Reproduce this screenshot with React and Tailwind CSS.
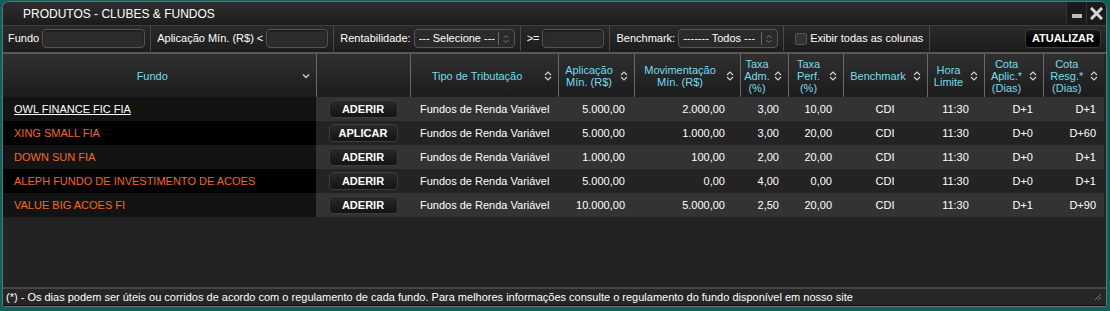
import React from "react";

const Sort = () => (
  <svg width="8" height="12" viewBox="0 0 8 12" className="shrink-0">
    <path d="M1 5 L4 2 L7 5" fill="none" stroke="#d0d0d0" strokeWidth="1.2" />
    <path d="M1 7 L4 10 L7 7" fill="none" stroke="#d0d0d0" strokeWidth="1.2" />
  </svg>
);

const Down = () => (
  <svg width="8" height="6" viewBox="0 0 8 6" className="shrink-0">
    <path d="M1 1.5 L4 4.5 L7 1.5" fill="none" stroke="#d0d0d0" strokeWidth="1.3" />
  </svg>
);

const SelChev = () => (
  <svg width="8" height="12" viewBox="0 0 8 12" className="shrink-0">
    <path d="M1.5 5 L4 2.5 L6.5 5" fill="none" stroke="#777" strokeWidth="1" />
    <path d="M1.5 7 L4 9.5 L6.5 7" fill="none" stroke="#777" strokeWidth="1" />
  </svg>
);

const Sep = () => <div className="w-px self-stretch bg-[#4a4a4a] ml-[5px] mr-[6px]" />;

const Input = ({ w }) => (
  <div className={`${w} h-[19px] rounded-[4px] border border-[#555] bg-[#2c2c2c] shadow-[inset_0_1px_2px_rgba(0,0,0,0.6)]`} />
);

const Select = ({ w, label }) => (
  <div className={`${w} h-[19px] rounded-[4px] border border-[#555] bg-[#2a2a2a] flex items-center pl-[4px] pr-[4px]`}>
    <span className="flex-1 text-white text-[11px] whitespace-nowrap overflow-hidden">{label}</span>
    <div className="w-px h-[13px] bg-[#666] mx-[3px]" />
    <SelChev />
  </div>
);

const headers = [
  { t: ["Fundo"], icon: "down" },
  { t: [], icon: null },
  { t: ["Tipo de Tributação"], icon: "sort" },
  { t: ["Aplicação", "Mín. (R$)"], icon: "sort" },
  { t: ["Movimentação", "Mín. (R$)"], icon: "sort" },
  { t: ["Taxa", "Adm.", "(%)"], icon: "sort" },
  { t: ["Taxa", "Perf.", "(%)"], icon: "sort" },
  { t: ["Benchmark"], icon: "sort" },
  { t: ["Hora", "Limite"], icon: "sort" },
  { t: ["Cota", "Aplic.*", "(Dias)"], icon: "sort" },
  { t: ["Cota", "Resg.*", "(Dias)"], icon: "sort" },
];

const widths = [313, 94, 148, 76, 106, 48, 55, 84, 57, 59, 61];

const rows = [
  ["OWL FINANCE FIC FIA", "ADERIR", "5.000,00", "2.000,00", "3,00", "10,00", "D+1", "D+1"],
  ["XING SMALL FIA", "APLICAR", "5.000,00", "1.000,00", "3,00", "20,00", "D+0", "D+60"],
  ["DOWN SUN FIA", "ADERIR", "1.000,00", "100,00", "2,00", "20,00", "D+0", "D+1"],
  ["ALEPH FUNDO DE INVESTIMENTO DE ACOES", "ADERIR", "5.000,00", "0,00", "4,00", "0,00", "D+0", "D+1"],
  ["VALUE BIG ACOES FI", "ADERIR", "10.000,00", "5.000,00", "2,50", "20,00", "D+1", "D+90"],
];

export default function App() {
  return (
    <div
      className="w-[1110px] h-[311px] bg-[#0d625d] pt-[1px] pl-[2px] pr-[3px] pb-[4px]"
      style={{ fontFamily: '"Liberation Sans", Arial, sans-serif' }}
    >
      <div className="h-full flex flex-col border border-[#6e6e6e] rounded-t-[7px] rounded-b-[2px] bg-[#222] overflow-hidden">
        {/* Title bar */}
        <div className="h-[24px] shrink-0 flex items-center border-b border-[#3e3e3e] bg-gradient-to-b from-[#2e2e2e] to-[#1c1c1c]">
          <span className="pl-[20px] text-white text-[12px] flex-1">PRODUTOS - CLUBES &amp; FUNDOS</span>
          <div className="flex items-stretch h-full">
            <div className="w-[20px] flex items-center justify-center border-l border-[#333] bg-[#1a1a1a]">
              <div className="w-[10px] h-[4px] bg-[#bdbdbd] mt-[5px]" />
            </div>
            <div className="w-[20px] flex items-center justify-center border-l border-[#333] bg-[#1a1a1a]">
              <svg width="13" height="13" viewBox="0 0 13 13">
                <path d="M2 2 L11 11 M11 2 L2 11" stroke="#d4d4d4" strokeWidth="3" strokeLinecap="square" />
              </svg>
            </div>
          </div>
        </div>

        {/* Filter bar */}
        <div className="h-[25px] shrink-0 flex items-center pl-[5px] pr-[5px] text-white text-[11px] bg-gradient-to-b from-[#2a2a2a] to-[#1d1d1d]">
          <span className="mr-[3px]">Fundo</span>
          <Input w="w-[103px]" />
          <Sep />
          <span className="mr-[3px]">Aplicação Mín. (R$) &lt;</span>
          <Input w="w-[62px]" />
          <Sep />
          <span className="mr-[3px]">Rentabilidade:</span>
          <Select w="w-[101px]" label="--- Selecione ---" />
          <Sep />
          <span className="mr-[3px]">&gt;=</span>
          <Input w="w-[62px]" />
          <Sep />
          <span className="mr-[3px]">Benchmark:</span>
          <Select w="w-[100px]" label="------- Todos ---" />
          <Sep />
          <div className="ml-[5px] w-[12px] h-[12px] rounded-[2px] border border-[#555] bg-[#333] mr-[3px]" />
          <span>Exibir todas as colunas</span>
          <div className="w-px self-stretch bg-[#4a4a4a] ml-[6px]" />
          <div className="flex-1" />
          <div className="h-[19px] px-[6px] rounded-[4px] bg-gradient-to-b from-[#1c1c1c] to-[#000] border border-[#3a3a3a] flex items-center font-bold text-[11px] text-white">
            ATUALIZAR
          </div>
        </div>

        {/* separator */}
        <div className="h-[3px] shrink-0 border-t border-[#1a1a1a] bg-[#595959]" />

        {/* Table */}
        <table className="table-fixed border-collapse w-[1101px] shrink-0 text-[11px]">
          <colgroup>
            {widths.map((w, i) => (
              <col key={i} style={{ width: w }} />
            ))}
          </colgroup>
          <thead>
            <tr className="h-[43px] bg-gradient-to-b from-[#303030] to-[#1c1c1c]">
              {headers.map((h, i) => (
                <th key={i} className={`p-0 font-normal ${i < 10 ? "border-r border-[#6a6a6a]" : ""}`}>
                  <div className="flex items-center h-[43px] pr-[6px]">
                    <div className="flex-1 text-center text-[#74dcef] leading-[12px]">
                      {h.t.map((l, j) => (
                        <div key={j}>{l}</div>
                      ))}
                    </div>
                    {h.icon === "sort" && <Sort />}
                    {h.icon === "down" && <Down />}
                  </div>
                </th>
              ))}
            </tr>
          </thead>
          <tbody>
            {rows.map((r, i) => {
              const odd = i % 2 === 0;
              const bg = odd ? "bg-[#333333]" : "bg-[#232323]";
              return (
                <tr key={i} className={`h-[24px] text-white ${bg}`}>
                  <td className={`p-0 pl-[11px] ${odd ? "bg-[#131313]" : "bg-[#000]"}`}>
                    <span className={i === 0 ? "text-white underline" : "text-[#f26a1b]"}>{r[0]}</span>
                  </td>
                  <td className="p-0">
                    <div className="flex justify-center">
                      <div className="w-[69px] h-[18px] rounded-[4px] border border-[#3c3c3c] bg-gradient-to-b from-[#2a2a2a] to-[#141414] flex items-center justify-center font-bold text-[11px] text-white">
                        {r[1]}
                      </div>
                    </div>
                  </td>
                  <td className="p-0 pl-[10px]">Fundos de Renda Variável</td>
                  <td className="p-0 pr-[9px] text-right">{r[2]}</td>
                  <td className="p-0 pr-[15px] text-right">{r[3]}</td>
                  <td className="p-0 pr-[9px] text-right">{r[4]}</td>
                  <td className="p-0 pr-[11px] text-right">{r[5]}</td>
                  <td className="p-0 text-center">CDI</td>
                  <td className="p-0 text-center">11:30</td>
                  <td className="p-0 pr-[10px] text-right">{r[6]}</td>
                  <td className="p-0 pr-[8px] text-right">{r[7]}</td>
                </tr>
              );
            })}
          </tbody>
        </table>

        <div className="flex-1 bg-[#222]" />

        {/* Footer */}
        <div className="shrink-0 border-t-2 border-[#474747] bg-[#262626] h-[19px] flex items-center pl-[3px] pr-[2px] border-b border-b-[#111] relative">
          <span className="text-white text-[11px] flex-1 whitespace-nowrap">
            (*) - Os dias podem ser úteis ou corridos de acordo com o regulamento de cada fundo. Para melhores informações consulte o regulamento do fundo disponível em nosso site
          </span>
          <svg width="8" height="8" viewBox="0 0 8 8" className="mr-[2px]">
            <path d="M7 1 L1 7 M7 4 L4 7 M7 6.5 L6.5 7" stroke="#777" strokeWidth="1" />
          </svg>
        </div>
      </div>
    </div>
  );
}
